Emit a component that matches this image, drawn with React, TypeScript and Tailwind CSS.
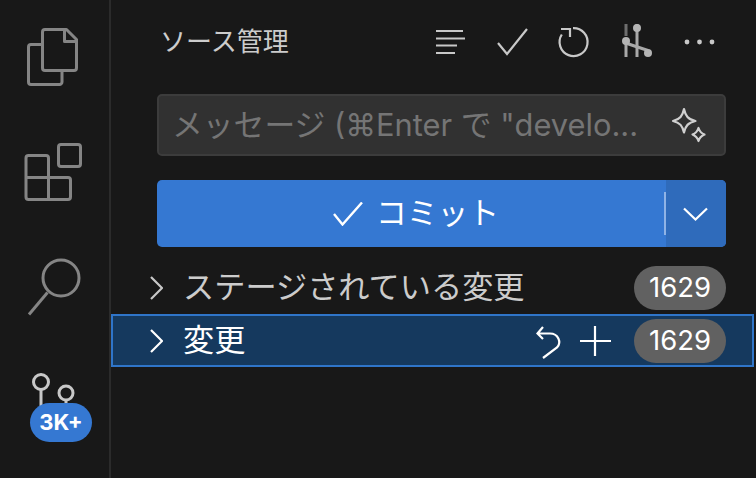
function Activity() {
  const s = { fill: "none", stroke: "#858585", strokeWidth: 3, strokeLinejoin: "round" as const };
  return (
    <aside className="w-[111px] h-full shrink-0 border-r-2 border-[#2b2b2b] flex flex-col relative">
      <svg width="110" height="115" viewBox="0 0 110 115" {...s}>
        <path d="M42 44.5H31a2.5 2.5 0 0 0-2.5 2.5V82a2.5 2.5 0 0 0 2.5 2.5H59.5a2.5 2.5 0 0 0 2.5-2.5V70.500" />
        <path d="M45 29.500H66.500L76.500 39.500V68a2.500 2.500 0 0 1-2.500 2.500H45a2.500 2.500 0 0 1-2.500-2.500V32a2.500 2.500 0 0 1 2.500-2.500Z" />
        <path d="M64.500 30V41.500H76" />
      </svg>
      <svg width="110" height="115" viewBox="0 115 110 115" {...s}>
        <path d="M48.500 177.500V158a2.500 2.500 0 0 0-2.500-2.500H28.500a2.500 2.500 0 0 0-2.500 2.500V197a2.500 2.500 0 0 0 2.500 2.500H68a2.500 2.500 0 0 0 2.500-2.500V180a2.500 2.500 0 0 0-2.500-2.500H26M48.500 177.500V199.500" />
        <rect x="58.500" y="144.500" width="22" height="22" rx="2.500" />
      </svg>
      <svg width="110" height="115" viewBox="0 230 110 115" {...s}>
        <circle cx="61" cy="278" r="18" />
        <path d="M47.500 292.500L29 314.500" />
      </svg>
      <svg width="110" height="115" viewBox="0 345 110 115" fill="none" stroke="#c8c8c8" strokeWidth="3">
        <circle cx="41" cy="382" r="7.500" />
        <circle cx="66" cy="393" r="7" />
        <path d="M41 390V410M66 400V410" />
      </svg>
      <span className="absolute left-[30px] top-[403px] h-[39px] w-[62px] rounded-full bg-[#3578d2] text-white text-[22px] font-bold flex items-center justify-center">3K+</span>
    </aside>
  );
}

function Header() {
  return (
    <header className="h-[82px] flex items-center justify-between pl-[49px] pr-[30px]">
      <h1 className="text-[26px] text-[#cccccc] font-normal leading-none pt-[2px]">ソース管理</h1>
      <svg width="290" height="50" viewBox="434 16 290 50" fill="none" stroke="#c8c8c8" strokeWidth="2.200" className="mr-[2px]">
        <path d="M436 31H463M436 38.500H465M436 45.500H457M436 53H455" />
        <path d="M498 43L507 54L527 29" />
        <path d="M573 28.100A14 14 0 1 1 561.800 34.500" />
        <path d="M561 29H570V37" />
        <path d="M626 24V36" strokeWidth="3" stroke="#6e6e6e" />
        <path d="M626 44V57M637 24V57" strokeWidth="3" stroke="#a8a8a8" />
        <path d="M627 43.500L648 50.500" strokeWidth="3" stroke="#a8a8a8" />
        <g fill="#b4b4b4" stroke="none">
          <circle cx="626" cy="41" r="4" />
          <circle cx="637" cy="28" r="4" />
          <circle cx="648" cy="53" r="4" />
        </g>
        <g fill="#c8c8c8" stroke="none">
          <circle cx="687" cy="42" r="2.400" />
          <circle cx="699.500" cy="42" r="2.400" />
          <circle cx="712" cy="42" r="2.400" />
        </g>
      </svg>
    </header>
  );
}

function Message() {
  return (
    <div className="mt-[12px] ml-[46px] mr-[30px] h-[62px] rounded-[5px] bg-[#313131] border-2 border-[#3c3c3c] flex items-center pl-[13px] pr-[16px] justify-between">
      <span className="text-[30.800px] text-[#757575] leading-none whitespace-nowrap">メッセージ (⌘Enter で "develo...</span>
      <svg width="40" height="40" viewBox="670 105 40 40" fill="none" stroke="#d0d0d0" strokeWidth="2.200" strokeLinejoin="round" className="shrink-0 -mr-[2px]">
        <path d="M684 109C685.500 116 688 119.500 695.500 121C688 122.500 685.500 126 684 132.500C682.500 126 680 122.500 673 121C680 119.500 682.500 116 684 109Z" />
        <path d="M698.500 128C699.500 131 700.500 133 704.500 134.500C700.500 136 699.500 138 698.500 141C697.500 138 696.500 136 692.500 134.500C696.500 133 697.500 131 698.500 128Z" />
      </svg>
    </div>
  );
}

function Commit() {
  return (
    <div className="mt-[24px] ml-[46px] mr-[30px] h-[67px] rounded-[5px] overflow-hidden bg-[#3578d2] flex items-stretch">
      <div className="flex-1 flex items-center justify-center gap-[15px] text-white text-[30.800px] pl-[11px]">
        <svg width="30" height="24" viewBox="334 201 30 24" fill="none" stroke="#ffffff" strokeWidth="2.400" className="-mr-[2px]">
          <path d="M335 213L343.500 223.500L363 201.500" />
        </svg>
        <span className="leading-none">コミット</span>
      </div>
      <div className="w-[2px] my-[12px] bg-[#8fb3e6]" />
      <div className="w-[60px] bg-[#2f6bbb] flex items-center justify-center">
        <svg width="26" height="16" viewBox="681 205 26 16" fill="none" stroke="#ffffff" strokeWidth="2.200" className="-ml-[3px]">
          <path d="M683 207.500L694.500 218.500L706 207.500" />
        </svg>
      </div>
    </div>
  );
}

function Chevron({ color }: { color: string }) {
  return (
    <svg width="14" height="24" viewBox="0 0 14 24" fill="none" stroke={color} strokeWidth="2.200" className="shrink-0">
      <path d="M2 1L13 12L2 23" />
    </svg>
  );
}

function Badge() {
  return (
    <span className="w-[92px] h-[44px] rounded-full bg-[#616161] text-white text-[27.500px] leading-none flex items-center justify-center shrink-0">1629</span>
  );
}

function Rows() {
  return (
    <div className="mt-[19px]">
      <div className="h-[48px] pl-[38px] pr-[30px] pb-[4px] flex items-center">
        <Chevron color="#c8c8c8" />
        <span className="ml-[20px] flex-1 text-[#cccccc] text-[31.200px] leading-none whitespace-nowrap">ステージされている変更</span>
        <Badge />
      </div>
      <div className="h-[53px] mr-[2px] border-2 border-[#2f75c9] bg-[#15395e] pl-[36px] pr-[26px] flex items-center">
        <Chevron color="#ffffff" />
        <span className="ml-[20px] flex-1 text-white text-[31.200px] leading-none whitespace-nowrap">変更</span>
        <svg width="78" height="36" viewBox="534 322 78 36" fill="none" stroke="#ffffff" strokeWidth="2.200" className="mr-[22px]">
          <path d="M543 326L537.500 332.500L543 338M537.500 332.500H550C558 332.500 562 341 557 346.500L543 357" />
          <path d="M595 325V355M580 340H611" />
        </svg>
        <Badge />
      </div>
    </div>
  );
}

export default function App() {
  return (
    <div className="w-[756px] h-[478px] bg-[#181818] flex overflow-hidden font-['Inter','Noto_Sans_CJK_JP',sans-serif]">
      <Activity />
      <main className="flex-1 min-w-0 flex flex-col">
        <Header />
        <Message />
        <Commit />
        <Rows />
      </main>
    </div>
  );
}
